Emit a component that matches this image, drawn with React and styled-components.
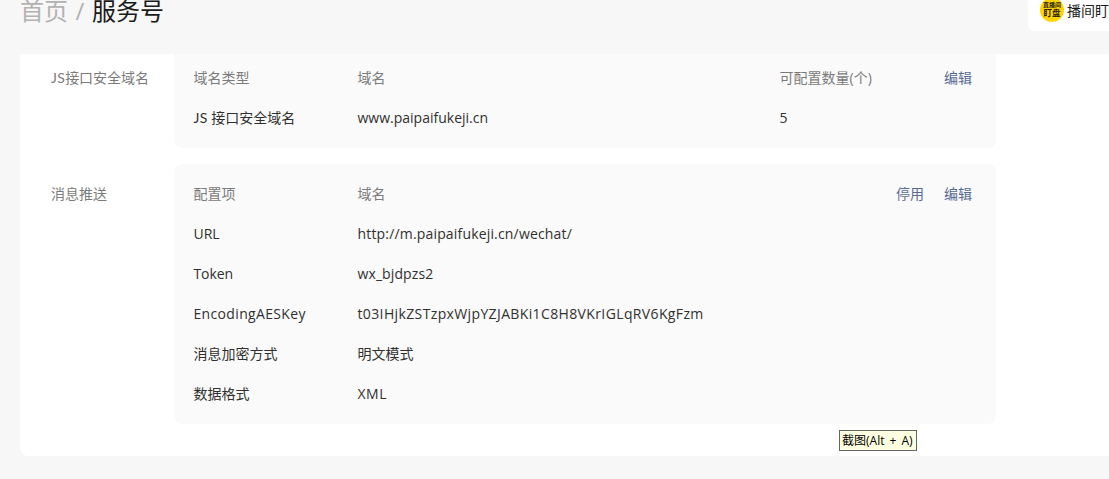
import React from "react";
import styled, { createGlobalStyle } from "styled-components";

const domainRows = [
  {
    prefix: "JS",
    name: " 接口安全域名",
    value: "www.paipaifukeji.cn",
    count: "5",
  },
];

const pushRows = [
  { name: "URL", value: "http://m.paipaifukeji.cn/wechat/", valueSpacing: 0.17 },
  { name: "Token", nameSpacing: -0.1, value: "wx_bjdpzs2", valueSpacing: 0.1 },
  {
    name: "EncodingAESKey",
    nameSpacing: 0.34,
    value: "t03IHjkZSTzpxWjpYZJABKi1C8H8VKrIGLqRV6KgFzm",
    valueSpacing: 0.37,
  },
  { name: "消息加密方式", value: "明文模式" },
  { name: "数据格式", value: "XML", valueSpacing: 0.5 },
];

function App() {
  return (
    <Page>
      <GlobalStyle />
      <Header>
        <Breadcrumb>
          <span className="parent">首页</span>
          <span className="slash">/</span>
          <span>服务号</span>
        </Breadcrumb>
        <Account>
          <Avatar>
            <span className="small">直播间</span>
            <span className="big">盯盘</span>
          </Avatar>
          <span>播间盯盘</span>
        </Account>
      </Header>
      <Card>
        <Section>
          <Label $top={14}>
            <Latin>JS</Latin>接口安全域名
          </Label>
          <Panel $first>
            <Row $head>
              <span>域名类型</span>
              <span>域名</span>
              <span>可配置数量(个)</span>
              <Actions>
                <Link>编辑</Link>
              </Actions>
            </Row>
            {domainRows.map((row) => (
              <Row key={row.value}>
                <Text>
                  <Latin>{row.prefix}</Latin>
                  {row.name}
                </Text>
                <Text>{row.value}</Text>
                <Text>{row.count}</Text>
              </Row>
            ))}
          </Panel>
        </Section>
        <Section>
          <Label $top={20}>消息推送</Label>
          <Panel>
            <Row $head>
              <span>配置项</span>
              <span>域名</span>
              <span />
              <Actions>
                <Link>停用</Link>
                <Link>编辑</Link>
              </Actions>
            </Row>
            {pushRows.map((row) => (
              <Row key={row.value}>
                <Text $spacing={row.nameSpacing}>{row.name}</Text>
                <Text $spacing={row.valueSpacing}>{row.value}</Text>
              </Row>
            ))}
          </Panel>
        </Section>
      </Card>
      <Tooltip>截图(Alt + A)</Tooltip>
    </Page>
  );
}

const GlobalStyle = createGlobalStyle`
  * {
    box-sizing: border-box;
  }
  body {
    margin: 0;
    overflow: hidden;
    background-color: #f7f7f7;
  }
`;

const Page = styled.div`
  position: relative;
  height: 479px;
  overflow: hidden;
  background-color: #f7f7f7;
  color: #303030;
  font-family: "Open Sans", "Noto Sans CJK SC", sans-serif;
  font-size: 14px;
  line-height: 20px;
  white-space: nowrap;
`;

const Header = styled.div`
  display: flex;
  justify-content: space-between;
  align-items: flex-start;
  height: 54px;
  padding-left: 20px;
`;

const Breadcrumb = styled.div`
  display: flex;
  height: 21px;
  align-items: center;
  font-size: 24px;
  color: #1a1a1a;
  .parent,
  .slash {
    color: #b2b2b2;
  }
  .slash {
    width: 24px;
    text-align: center;
  }
`;

const Account = styled.div`
  display: flex;
  gap: 3px;
  width: 81px;
  height: 31px;
  padding: 0 0 0 12px;
  overflow: hidden;
  border-radius: 0 0 0 6px;
  background-color: #fff;
  color: #1a1a1a;
  line-height: 22px;
`;

const Avatar = styled.div`
  display: flex;
  flex-direction: column;
  flex-shrink: 0;
  align-items: center;
  width: 24px;
  height: 24px;
  margin-top: -2px;
  padding-top: 4px;
  border-radius: 50%;
  background-color: #ffd400;
  color: #2b2400;
  font-weight: 700;
  .small {
    font-size: 6px;
    line-height: 6px;
  }
  .big {
    font-size: 8.5px;
    line-height: 10px;
  }
`;

const Card = styled.div`
  display: flex;
  flex-direction: column;
  gap: 16px;
  height: 402px;
  margin-left: 20px;
  border-radius: 0 0 0 8px;
  background-color: #fff;
`;

const Section = styled.div`
  display: flex;
`;

const Label = styled.div`
  width: 154px;
  padding: ${(props) => props.$top}px 0 0 31px;
  color: #7b7b7b;
`;

const Panel = styled.div`
  display: flex;
  flex-direction: column;
  gap: 20px;
  width: 822px;
  padding: ${(props) => (props.$first ? "14px" : "20px")} 24px 20px 19.5px;
  border-radius: ${(props) => (props.$first ? "0 0 8px 8px" : "8px")};
  background-color: #fafafa;
`;

const Row = styled.div`
  display: grid;
  grid-template-columns: 164px 422px 94px 1fr;
  height: 20px;
  color: ${(props) => (props.$head ? "#7b7b7b" : "#303030")};
`;

const Text = styled.span`
  letter-spacing: ${(props) => props.$spacing || 0}px;
`;

// Keeps the J on the baseline next to the Chinese text
const Latin = styled.span`
  font-family: Lato, sans-serif;
  letter-spacing: 0.3px;
`;

const Actions = styled.div`
  display: flex;
  justify-content: flex-end;
  gap: 20px;
`;

const Link = styled.a`
  color: #576b95;
`;

const Tooltip = styled.div`
  position: absolute;
  left: 839px;
  top: 430px;
  width: 78px;
  height: 21px;
  padding-left: 2px;
  border: 1px solid #646464;
  background-color: #ffffe1;
  color: #000;
  font-size: 12px;
  line-height: 19px;
  word-spacing: 2px;
`;

export default App;
